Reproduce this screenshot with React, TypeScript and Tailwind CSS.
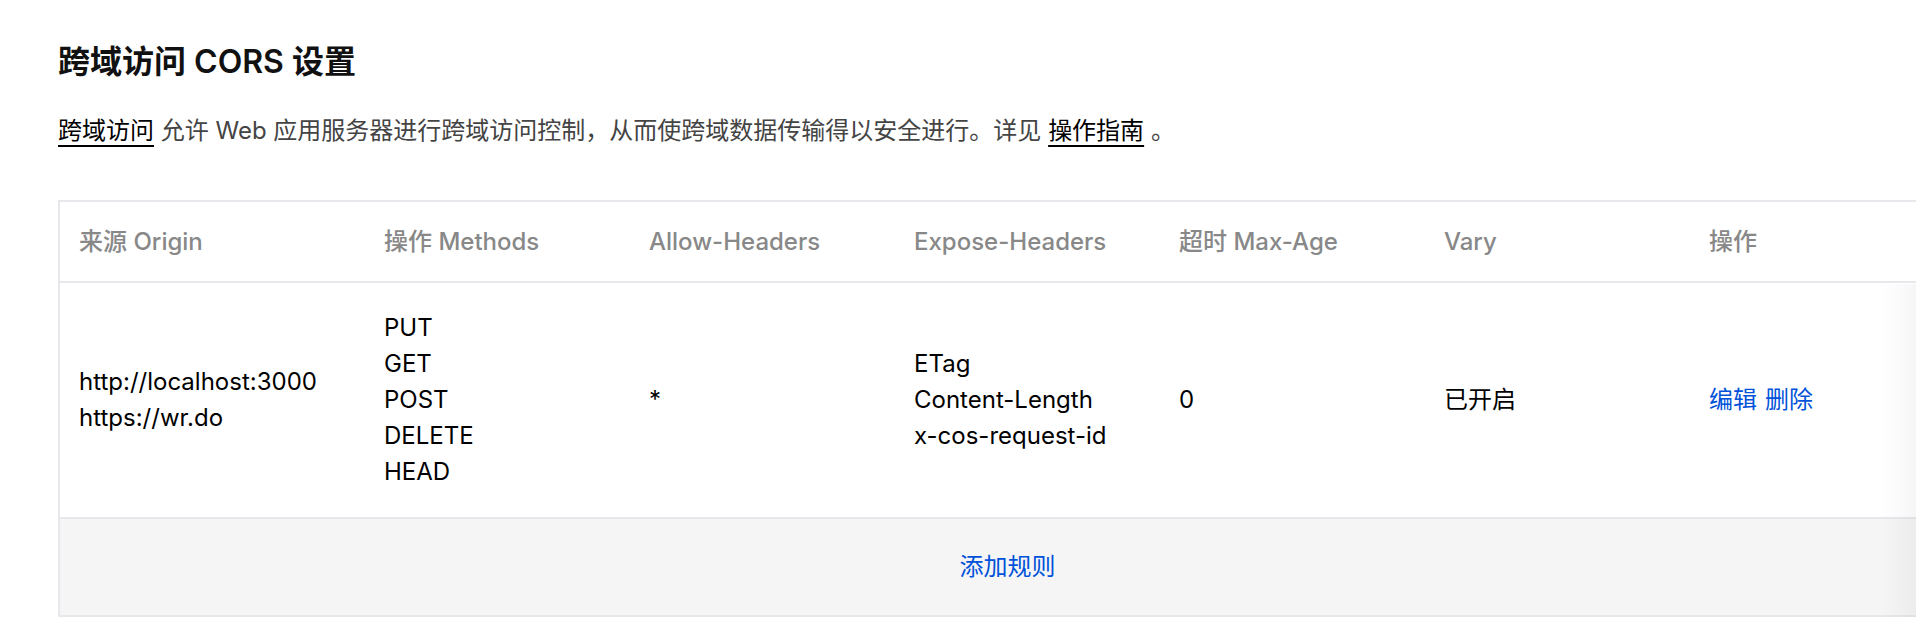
import React from "react";

const cols = "grid grid-cols-[305px_265px_265px_265px_265px_265px_265px] [&>*]:pl-[19px]";

export default function App() {
  return (
    <div className="relative w-[1916px] h-[618px] overflow-hidden bg-white font-['Inter','Noto_Sans_CJK_SC',sans-serif] text-black">
      <div className="pl-[58px]">
        <h1 className="pt-[40px] text-[32px] leading-[44px] font-semibold text-[#111]">
          跨域访问 CORS 设置
        </h1>
        <p className="mt-[29px] text-[24px] leading-[36px] text-[#444]">
          <span className="text-black underline underline-offset-[6px] decoration-2">跨域访问</span>{" "}
          允许 Web 应用服务器进行跨域访问控制，从而使跨域数据传输得以安全进行。详见{" "}
          <span className="text-black underline underline-offset-[6px] decoration-2">操作指南</span> 。
        </p>

        <div className="mt-[51px] w-[1897px] border-t-2 border-l-2 border-b-2 border-[#e7e7ec] text-[24px] leading-[36px]">
          <div className={`${cols} h-[81px] items-center border-b-2 border-[#e7e7ec] font-medium text-[#888]`}>
            <div>来源 Origin</div>
            <div>操作 Methods</div>
            <div>Allow-Headers</div>
            <div>Expose-Headers</div>
            <div>超时 Max-Age</div>
            <div>Vary</div>
            <div>操作</div>
          </div>
          <div className={`${cols} h-[236px] items-center border-b-2 border-[#e7e7ec] text-black`}>
            <div className="flex flex-col">
              <span>http://localhost:3000</span>
              <span>https://wr.do</span>
            </div>
            <div className="flex flex-col">
              <span>PUT</span>
              <span>GET</span>
              <span>POST</span>
              <span>DELETE</span>
              <span>HEAD</span>
            </div>
            <div>*</div>
            <div className="flex flex-col">
              <span>ETag</span>
              <span>Content-Length</span>
              <span>x-cos-request-id</span>
            </div>
            <div>0</div>
            <div>已开启</div>
            <div className="flex gap-[8px] text-[#0052d9]">
              <span>编辑</span>
              <span>删除</span>
            </div>
          </div>
          <div className="h-[96px] bg-[#f5f5f6] flex items-center justify-center text-[#0052d9]">
            添加规则
          </div>
        </div>
      </div>
      <div className="absolute right-0 top-[284px] h-[333px] w-[36px] bg-gradient-to-l from-[rgba(0,0,0,0.035)] to-transparent" />
    </div>
  );
}
